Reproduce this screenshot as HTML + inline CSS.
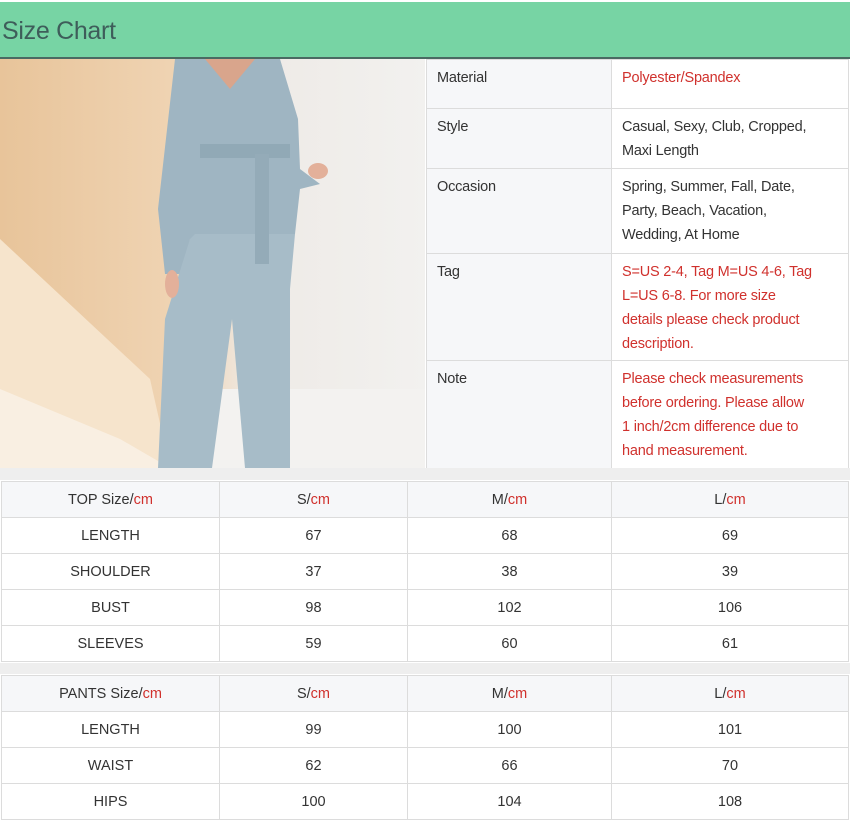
<!DOCTYPE html>
<html><head><meta charset="utf-8"><style>
body{margin:0;width:850px;height:823px;background:#fff;font-family:"Liberation Sans",sans-serif;color:#333;position:relative;overflow:hidden}
.hdr{position:absolute;left:0;top:2px;width:850px;height:55px;background:#77d4a4;border-bottom:2px solid #4a6a62}
.hdr span{position:absolute;left:2px;top:15px;font-size:25px;color:#3e5d5a;letter-spacing:-0.3px}
.pic{position:absolute;left:0;top:59px;width:425px;height:409px}
table{border-collapse:collapse;position:absolute;font-size:14.5px;table-layout:fixed}
td{border:1px solid #dcdcdc}
.info{left:426px;top:59px;width:423px;letter-spacing:-0.2px}
.info td{vertical-align:top;padding:6px 10px 0;line-height:24px;white-space:nowrap;overflow:hidden}
.info td:first-child{width:164px;background:#f6f7f9}
.r{color:#d0312d}
.sz{left:1px;width:848px}
.sz td{text-align:center;height:35px;padding:0}
.sz tr:first-child td{background:#f6f7f9}
.gap{position:absolute;left:0;width:850px;background:#eeeeee}
</style></head><body>
<div class="hdr"><span>Size Chart</span></div>
<svg class="pic" viewBox="0 0 425 409" width="425" height="409">
<defs><linearGradient id="bg" x1="0" y1="0" x2="1" y2="0"><stop offset="0" stop-color="#e8c49a"/><stop offset="0.45" stop-color="#f0d5b5"/><stop offset="0.6" stop-color="#eeeae6"/><stop offset="1" stop-color="#f2f1ef"/></linearGradient></defs>
<rect width="425" height="409" fill="url(#bg)"/>
<polygon points="0,180 150,320 170,409 0,409" fill="#f6e4cc"/>
<polygon points="0,330 120,380 170,409 0,409" fill="#f9efe2"/>
<rect x="170" y="330" width="255" height="79" fill="#f3f2f0"/>
<path d="M175,0 L280,0 L298,60 L300,110 L320,125 L300,130 L295,175 L250,182 L190,180 L185,215 L165,215 L158,150 Z" fill="#9fb5c2"/>
<path d="M195,175 L295,175 L290,230 L290,409 L245,409 L232,260 L212,409 L158,409 L165,260 L190,180Z" fill="#a7bcc8"/>
<rect x="200" y="85" width="90" height="14" fill="#91a9b6"/>
<rect x="255" y="95" width="14" height="110" fill="#94abb8"/>
<path d="M205,0 L255,0 L230,30Z" fill="#d9a58c"/>
<ellipse cx="318" cy="112" rx="10" ry="8" fill="#e3b09a"/>
<ellipse cx="172" cy="225" rx="7" ry="14" fill="#e3b09a"/>
</svg>
<table class="info">
<tr style="height:49px"><td>Material</td><td class="r">Polyester/Spandex</td></tr>
<tr style="height:60px"><td>Style</td><td>Casual, Sexy, Club, Cropped,<br>Maxi Length</td></tr>
<tr style="height:85px"><td>Occasion</td><td>Spring, Summer, Fall, Date,<br>Party, Beach, Vacation,<br>Wedding, At Home</td></tr>
<tr style="height:107px"><td>Tag</td><td class="r">S=US 2-4, Tag M=US 4-6, Tag<br>L=US 6-8. For more size<br>details please check product<br>description.</td></tr>
<tr style="height:108px"><td>Note</td><td class="r">Please check measurements<br>before ordering. Please allow<br>1 inch/2cm difference due to<br>hand measurement.</td></tr>
</table>
<div class="gap" style="top:468px;height:12px"></div>
<table class="sz" style="top:481px">
<colgroup><col style="width:218px"><col style="width:188px"><col style="width:204px"><col></colgroup>
<tr><td>TOP Size/<span class="r">cm</span></td><td>S/<span class="r">cm</span></td><td>M/<span class="r">cm</span></td><td>L/<span class="r">cm</span></td></tr>
<tr><td>LENGTH</td><td>67</td><td>68</td><td>69</td></tr>
<tr><td>SHOULDER</td><td>37</td><td>38</td><td>39</td></tr>
<tr><td>BUST</td><td>98</td><td>102</td><td>106</td></tr>
<tr><td>SLEEVES</td><td>59</td><td>60</td><td>61</td></tr>
</table>
<div class="gap" style="top:663px;height:11px"></div>
<table class="sz" style="top:675px">
<colgroup><col style="width:218px"><col style="width:188px"><col style="width:204px"><col></colgroup>
<tr><td>PANTS Size/<span class="r">cm</span></td><td>S/<span class="r">cm</span></td><td>M/<span class="r">cm</span></td><td>L/<span class="r">cm</span></td></tr>
<tr><td>LENGTH</td><td>99</td><td>100</td><td>101</td></tr>
<tr><td>WAIST</td><td>62</td><td>66</td><td>70</td></tr>
<tr><td>HIPS</td><td>100</td><td>104</td><td>108</td></tr>
</table>
</body></html>
